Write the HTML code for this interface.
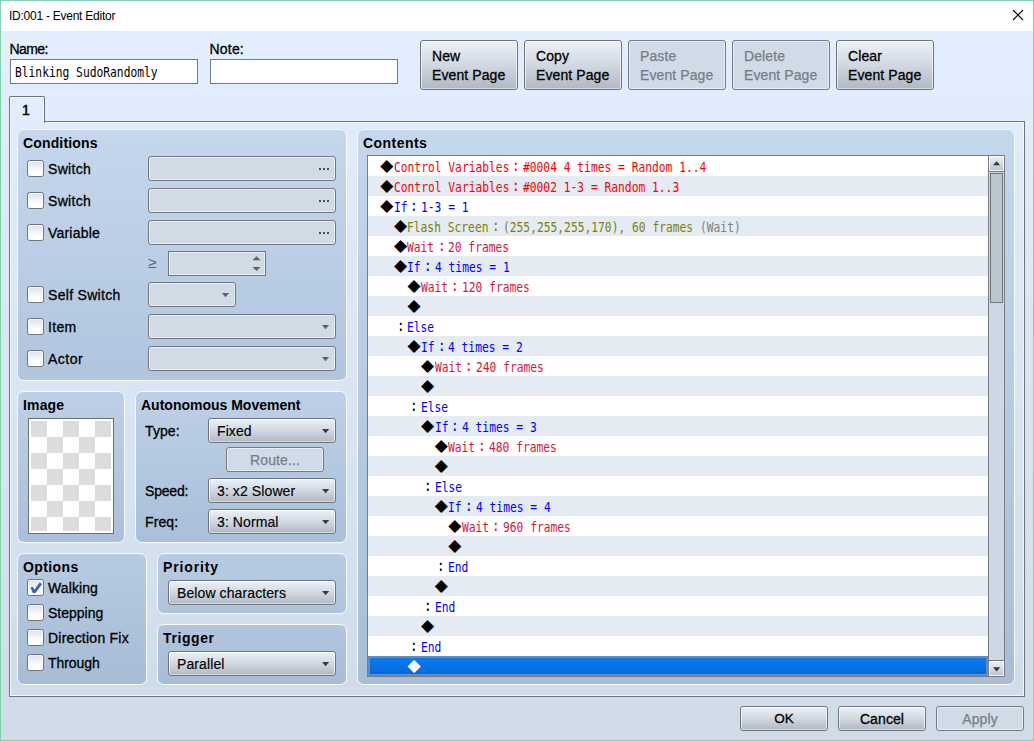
<!DOCTYPE html>
<html lang="en"><head><meta charset="utf-8"><title>ID:001 - Event Editor</title>
<style>
*{box-sizing:border-box;margin:0;padding:0}
html,body{width:1034px;height:741px;overflow:hidden}
body{background:#7dd3ae;font-family:"Liberation Sans","DejaVu Sans",sans-serif;font-size:14px;color:#000;position:relative}
.abs,#win *{position:absolute}
#win{position:absolute;left:1px;top:1px;width:1032px;height:739px;background:#fff;overflow:hidden}
/* coordinates inside #cv are absolute page coordinates */
#cv{left:-1px;top:-1px;width:1034px;height:741px}
#bg{left:1px;top:31px;width:1032px;height:709px;background:linear-gradient(#e3eefe,#cfdce8)}
#title{left:9px;top:8px;font-size:12px;line-height:16px;white-space:pre;letter-spacing:-.25px}
.lbl{white-space:pre;line-height:16px;-webkit-text-stroke:.3px #000;letter-spacing:.1px}
.hd{white-space:pre;line-height:16px;font-weight:bold;letter-spacing:.15px}
.inp{background:#fff;border:1px solid #777b80}
.mono{font-family:"DejaVu Sans Mono","Liberation Mono",monospace;font-size:13.5px;white-space:pre;transform-origin:0 50%;transform:scaleX(.8355);line-height:16px}
.btn{border:1px solid #6f757d;border-radius:3px;background:linear-gradient(#edf1f8,#d1d8e1 50%,#b1b8c3);box-shadow:inset 0 1px 0 0 rgba(255,255,255,.85),inset 0 -1px 0 0 rgba(255,255,255,.45),inset 1px 0 0 0 rgba(255,255,255,.6),inset -1px 0 0 0 rgba(255,255,255,.6)}
.btn.dis{background:#d0dbe7;border-color:#747a82;box-shadow:inset 0 0 0 1px rgba(255,255,255,.5)}
.btn .lbl{left:11px}
.dis .lbl{color:#777d87;-webkit-text-stroke:.25px #777d87}
.pane{border:1px solid #70747a;box-shadow:inset 0 0 0 1px #f4f8fd}
.tab{border:1px solid #70747a;border-bottom:none;border-radius:2px 2px 0 0;background:#e1ecfc;box-shadow:inset 1px 1px 0 0 #f4f8fd,inset -1px 0 0 0 #f4f8fd}
.panel{border:1px solid #f6f9fd;border-radius:7px}
.fld{border:1px solid #72787f;border-radius:3px;background:#d0dbe6;box-shadow:inset 0 0 0 1px rgba(255,255,255,.5)}
.cb{width:17px;height:17px;border:1px solid #6f757d;border-radius:2.5px;background:linear-gradient(#dce3ed,#fff 75%);box-shadow:inset 0 0 0 1px rgba(255,255,255,.6)}
.arr{width:0;height:0;border-left:4px solid transparent;border-right:4px solid transparent;border-top:4px solid #3a3d42}
.arr.g{border-top-color:#5d6269;border-left-width:3.5px;border-right-width:3.5px}
.dots{font-size:0}
.dots i{width:2px;height:2px;background:#4a4e55;top:0}
#list{left:367px;top:155px;width:638px;height:522px;border:1px solid #787c82;background:#fff;overflow:hidden}
.row{left:0;width:620px;height:20px}
.row.alt{background:#e4ebf3}
.row.sel{background:linear-gradient(#0a7ef2,#0068da);box-shadow:inset 0 0 0 2px #668cbc}
.row span{top:3px;line-height:16px;white-space:pre}
.tx,.cl{font-family:"DejaVu Sans Mono","Liberation Mono",monospace;font-size:13.5px;transform-origin:0 50%;transform:scaleX(.8355)}
.cl{width:16.52px;text-align:center;font-size:16px;top:2px !important}
.dm{font-family:"DejaVu Sans","Liberation Sans",sans-serif;font-size:17px;width:13.8px;text-align:center;top:1px !important}
.sel .dm{color:#fff}
.r{color:#ff0000}.b{color:#0000ff}.o{color:#808000}.w{color:#dc143c}.g{color:#808080}
#sb{left:620px;top:0;width:16px;height:520px;background:#cdd8e4;border-left:1px solid #787c82}
.sbtn{background:linear-gradient(#eef1f5,#bcc3cc);box-shadow:inset 0 0 0 1px rgba(255,255,255,.75)}
.arr.up{border-top:none;border-bottom:4px solid #3a3d42;border-left-width:3.5px;border-right-width:3.5px}
.thumb{background:#bcc6d1;border:1px solid #70757c}
.k{color:#000}
.cl2{letter-spacing:.3px}
.ar{right:5px;top:9.8px}
.cmb .lbl{-webkit-text-stroke:.15px #000}

</style></head>
<body>
<div id="win"><div id="cv">
<div id="bg"></div>
<div id="title">ID:001 - Event Editor</div>
<svg id="close" style="left:1012px;top:9px" width="12" height="12" viewBox="0 0 12 12"><path d="M1 1 L11 11 M11 1 L1 11" stroke="#000" stroke-width="1.1" fill="none"/></svg>

<div class="lbl" style="left:9.5px;top:41px;letter-spacing:-.6px">Name:</div>
<div class="inp" style="left:10px;top:59px;width:188px;height:25px"><span class="mono" style="left:4px;top:4px">Blinking SudoRandomly</span></div>
<div class="lbl" style="left:209.5px;top:41px;letter-spacing:.2px">Note:</div>
<div class="inp" style="left:210px;top:59px;width:188px;height:25px"></div>

<div class="btn" style="left:420px;top:40px;width:98px;height:50px"><span class="lbl" style="top:7px">New</span><span class="lbl" style="top:26px">Event Page</span></div>
<div class="btn" style="left:524px;top:40px;width:98px;height:50px"><span class="lbl" style="top:7px">Copy</span><span class="lbl" style="top:26px">Event Page</span></div>
<div class="btn dis" style="left:628px;top:40px;width:98px;height:50px"><span class="lbl" style="top:7px">Paste</span><span class="lbl" style="top:26px">Event Page</span></div>
<div class="btn dis" style="left:732px;top:40px;width:98px;height:50px"><span class="lbl" style="top:7px">Delete</span><span class="lbl" style="top:26px">Event Page</span></div>
<div class="btn" style="left:836px;top:40px;width:98px;height:50px"><span class="lbl" style="top:7px">Clear</span><span class="lbl" style="top:26px">Event Page</span></div>

<div class="pane" style="left:9px;top:121px;width:1016px;height:576px"></div>
<div class="tab" style="left:9px;top:96px;width:36px;height:27px"><span class="lbl" style="left:12px;top:5px;-webkit-text-stroke:.5px #000">1</span></div>

<!-- Conditions -->
<div class="panel" style="left:17px;top:129px;width:330px;height:252px;background:linear-gradient(#c5d7ec,#b0c5de)"></div>
<div class="hd" style="left:23px;top:135px">Conditions</div>
<div class="cb" style="left:27px;top:160px"></div><div class="lbl cl2" style="left:48px;top:161px">Switch</div>
<div class="cb" style="left:27px;top:192px"></div><div class="lbl cl2" style="left:48px;top:193px">Switch</div>
<div class="cb" style="left:27px;top:224px"></div><div class="lbl cl2" style="left:48px;top:225px;letter-spacing:.2px">Variable</div>
<div class="cb" style="left:27px;top:286px"></div><div class="lbl cl2" style="left:48px;top:287px">Self Switch</div>
<div class="cb" style="left:27px;top:318px"></div><div class="lbl cl2" style="left:48px;top:319px">Item</div>
<div class="cb" style="left:27px;top:350px"></div><div class="lbl cl2" style="left:48px;top:351px;letter-spacing:.5px">Actor</div>
<div class="fld" style="left:148px;top:156px;width:188px;height:25px"><span class="dots" style="left:170px;top:11px"><i style="left:0"></i><i style="left:4px"></i><i style="left:8px"></i></span></div>
<div class="fld" style="left:148px;top:188px;width:188px;height:25px"><span class="dots" style="left:170px;top:11px"><i style="left:0"></i><i style="left:4px"></i><i style="left:8px"></i></span></div>
<div class="fld" style="left:148px;top:220px;width:188px;height:25px"><span class="dots" style="left:170px;top:11px"><i style="left:0"></i><i style="left:4px"></i><i style="left:8px"></i></span></div>
<div class="lbl" style="left:148px;top:255px;font-size:15.5px;color:#5f656d;-webkit-text-stroke:0">≥</div>
<div class="fld" style="left:168px;top:251px;width:98px;height:25px;border-radius:0">
 <svg style="left:83px;top:4px" width="9" height="16" viewBox="0 0 9 16"><path d="M0.5 4.2 L4.5 0.2 L8.5 4.2 Z M0.5 11 L8.5 11 L4.5 15 Z" fill="#5d6269"/></svg></div>
<div class="fld" style="left:148px;top:282px;width:88px;height:25px"><svg class="ar" width="8" height="5" viewBox="0 0 8 5"><path d="M0 0 L7 0 L3.5 4.3 Z" fill="#5d6269"/></svg></div>
<div class="fld" style="left:148px;top:314px;width:188px;height:25px"><svg class="ar" width="8" height="5" viewBox="0 0 8 5"><path d="M0 0 L7 0 L3.5 4.3 Z" fill="#5d6269"/></svg></div>
<div class="fld" style="left:148px;top:346px;width:188px;height:25px"><svg class="ar" width="8" height="5" viewBox="0 0 8 5"><path d="M0 0 L7 0 L3.5 4.3 Z" fill="#5d6269"/></svg></div>

<!-- Image -->
<div class="panel" style="left:17px;top:391px;width:108px;height:152px;background:linear-gradient(#bdd0e7,#aabfd9)"></div>
<div class="hd" style="left:23px;top:397px">Image</div>
<div id="img" style="left:28px;top:418px;width:86px;height:116px;border:1px solid #6e7278;background:#fff">
 <div style="left:2px;top:2px;width:80px;height:110px;background-color:#fff;background-image:conic-gradient(#fff 25%,#dcdcdc 0 50%,#fff 0 75%,#dcdcdc 0);background-size:32px 32px"></div>
</div>

<!-- Autonomous Movement -->
<div class="panel" style="left:135px;top:391px;width:212px;height:152px;background:linear-gradient(#bdd0e7,#aabfd9)"></div>
<div class="hd" style="left:141px;top:397px;letter-spacing:0">Autonomous Movement</div>
<div class="lbl" style="left:145px;top:423px">Type:</div>
<div class="lbl" style="left:145px;top:483px;letter-spacing:-.2px">Speed:</div>
<div class="lbl" style="left:145px;top:514px">Freq:</div>
<div class="btn cmb" style="left:208px;top:418px;width:128px;height:25px"><span class="lbl" style="left:8px;top:4px">Fixed</span><svg class="ar" width="8" height="5" viewBox="0 0 8 5"><path d="M0 0 L7.2 0 L3.6 4.2 Z" fill="#393c41"/></svg></div>
<div class="btn dis" style="left:226px;top:447px;width:98px;height:25px"><span class="lbl" style="left:0;width:96px;text-align:center;top:4px">Route...</span></div>
<div class="btn cmb" style="left:208px;top:478px;width:128px;height:25px"><span class="lbl" style="left:8px;top:4px">3: x2 Slower</span><svg class="ar" width="8" height="5" viewBox="0 0 8 5"><path d="M0 0 L7.2 0 L3.6 4.2 Z" fill="#393c41"/></svg></div>
<div class="btn cmb" style="left:208px;top:509px;width:128px;height:25px"><span class="lbl" style="left:8px;top:4px">3: Normal</span><svg class="ar" width="8" height="5" viewBox="0 0 8 5"><path d="M0 0 L7.2 0 L3.6 4.2 Z" fill="#393c41"/></svg></div>

<!-- Options -->
<div class="panel" style="left:17px;top:553px;width:130px;height:132px;background:linear-gradient(#b7cbe2,#a7bcd5)"></div>
<div class="hd" style="left:23px;top:559px;letter-spacing:.4px">Options</div>
<div class="cb" style="left:27px;top:579px"><svg style="left:-1px;top:-1px" width="17" height="17" viewBox="0 0 17 17"><path d="M3.4 8.4 L5.8 7.8 L7.3 10.7 L12.75 3.5 L15 5 L8.5 13.9 L5.8 14 Z" fill="#3a5cbe"/></svg></div><div class="lbl cl2" style="left:48px;top:580px;letter-spacing:.1px">Walking</div>
<div class="cb" style="left:27px;top:604px"></div><div class="lbl cl2" style="left:48px;top:605px;letter-spacing:0">Stepping</div>
<div class="cb" style="left:27px;top:629px"></div><div class="lbl cl2" style="left:48px;top:630px;letter-spacing:.24px">Direction Fix</div>
<div class="cb" style="left:27px;top:654px"></div><div class="lbl cl2" style="left:48px;top:655px;letter-spacing:-.05px">Through</div>

<!-- Priority / Trigger -->
<div class="panel" style="left:157px;top:553px;width:190px;height:61px;background:linear-gradient(#b7cbe2,#afc4dc)"></div>
<div class="hd" style="left:163px;top:559px;letter-spacing:.85px">Priority</div>
<div class="btn cmb" style="left:168px;top:580px;width:168px;height:25px"><span class="lbl" style="left:8px;top:4px">Below characters</span><svg class="ar" width="8" height="5" viewBox="0 0 8 5"><path d="M0 0 L7.2 0 L3.6 4.2 Z" fill="#393c41"/></svg></div>
<div class="panel" style="left:157px;top:624px;width:190px;height:61px;background:linear-gradient(#b1c6de,#a7bcd5)"></div>
<div class="hd" style="left:163px;top:630px;letter-spacing:.6px">Trigger</div>
<div class="btn cmb" style="left:168px;top:651px;width:168px;height:25px"><span class="lbl" style="left:8px;top:4px">Parallel</span><svg class="ar" width="8" height="5" viewBox="0 0 8 5"><path d="M0 0 L7.2 0 L3.6 4.2 Z" fill="#393c41"/></svg></div>

<!-- Contents -->
<div class="panel" style="left:357px;top:129px;width:658px;height:556px;background:linear-gradient(#c5d7ec,#a9bdd6)"></div>
<div class="hd" style="left:363px;top:135px;letter-spacing:.45px">Contents</div>
<div id="list">
<div class="row" style="top:0px"><span class="dm" style="left:12.00px">◆</span><span class="tx r" style="left:25.80px">Control Variables</span><span class="cl r" style="left:141.23px">:</span><span class="tx r" style="left:155.03px">#0004 4 times = Random 1..4</span></div>
<div class="row alt" style="top:20px"><span class="dm" style="left:12.00px">◆</span><span class="tx r" style="left:25.80px">Control Variables</span><span class="cl r" style="left:141.23px">:</span><span class="tx r" style="left:155.03px">#0002 1-3 = Random 1..3</span></div>
<div class="row" style="top:40px"><span class="dm" style="left:12.00px">◆</span><span class="tx b" style="left:25.80px">If</span><span class="cl b" style="left:39.38px">:</span><span class="tx b" style="left:53.18px">1-3 = 1</span></div>
<div class="row alt" style="top:60px"><span class="dm" style="left:25.58px">◆</span><span class="tx o" style="left:39.38px">Flash Screen</span><span class="cl o" style="left:120.86px">:</span><span class="tx o" style="left:134.66px">(255,255,255,170), 60 frames </span><span class="tx g" style="left:331.57px">(Wait)</span></div>
<div class="row" style="top:80px"><span class="dm" style="left:25.58px">◆</span><span class="tx w" style="left:39.38px">Wait</span><span class="cl w" style="left:66.54px">:</span><span class="tx w" style="left:80.34px">20 frames</span></div>
<div class="row alt" style="top:100px"><span class="dm" style="left:25.58px">◆</span><span class="tx b" style="left:39.38px">If</span><span class="cl b" style="left:52.96px">:</span><span class="tx b" style="left:66.76px">4 times = 1</span></div>
<div class="row" style="top:120px"><span class="dm" style="left:39.16px">◆</span><span class="tx w" style="left:52.96px">Wait</span><span class="cl w" style="left:80.12px">:</span><span class="tx w" style="left:93.92px">120 frames</span></div>
<div class="row alt" style="top:140px"><span class="dm" style="left:39.16px">◆</span></div>
<div class="row" style="top:160px"><span class="cl k" style="left:25.58px">:</span><span class="tx b" style="left:39.38px">Else</span></div>
<div class="row alt" style="top:180px"><span class="dm" style="left:39.16px">◆</span><span class="tx b" style="left:52.96px">If</span><span class="cl b" style="left:66.54px">:</span><span class="tx b" style="left:80.34px">4 times = 2</span></div>
<div class="row" style="top:200px"><span class="dm" style="left:52.74px">◆</span><span class="tx w" style="left:66.54px">Wait</span><span class="cl w" style="left:93.70px">:</span><span class="tx w" style="left:107.50px">240 frames</span></div>
<div class="row alt" style="top:220px"><span class="dm" style="left:52.74px">◆</span></div>
<div class="row" style="top:240px"><span class="cl k" style="left:39.16px">:</span><span class="tx b" style="left:52.96px">Else</span></div>
<div class="row alt" style="top:260px"><span class="dm" style="left:52.74px">◆</span><span class="tx b" style="left:66.54px">If</span><span class="cl b" style="left:80.12px">:</span><span class="tx b" style="left:93.92px">4 times = 3</span></div>
<div class="row" style="top:280px"><span class="dm" style="left:66.32px">◆</span><span class="tx w" style="left:80.12px">Wait</span><span class="cl w" style="left:107.28px">:</span><span class="tx w" style="left:121.08px">480 frames</span></div>
<div class="row alt" style="top:300px"><span class="dm" style="left:66.32px">◆</span></div>
<div class="row" style="top:320px"><span class="cl k" style="left:52.74px">:</span><span class="tx b" style="left:66.54px">Else</span></div>
<div class="row alt" style="top:340px"><span class="dm" style="left:66.32px">◆</span><span class="tx b" style="left:80.12px">If</span><span class="cl b" style="left:93.70px">:</span><span class="tx b" style="left:107.50px">4 times = 4</span></div>
<div class="row" style="top:360px"><span class="dm" style="left:79.90px">◆</span><span class="tx w" style="left:93.70px">Wait</span><span class="cl w" style="left:120.86px">:</span><span class="tx w" style="left:134.66px">960 frames</span></div>
<div class="row alt" style="top:380px"><span class="dm" style="left:79.90px">◆</span></div>
<div class="row" style="top:400px"><span class="cl k" style="left:66.32px">:</span><span class="tx b" style="left:80.12px">End</span></div>
<div class="row alt" style="top:420px"><span class="dm" style="left:66.32px">◆</span></div>
<div class="row" style="top:440px"><span class="cl k" style="left:52.74px">:</span><span class="tx b" style="left:66.54px">End</span></div>
<div class="row alt" style="top:460px"><span class="dm" style="left:52.74px">◆</span></div>
<div class="row" style="top:480px"><span class="cl k" style="left:39.16px">:</span><span class="tx b" style="left:52.96px">End</span></div>
<div class="row alt sel" style="top:500px"><span class="dm" style="left:39.16px">◆</span></div>
<div id="sb">
 <div class="sbtn" style="left:0;top:0;width:15px;height:16px;border-bottom:1px solid #757b83"><svg style="left:4px;top:5.1px" width="8" height="5" viewBox="0 0 8 5"><path d="M0 4.3 L3.6 0.3 L7.2 4.3 Z" fill="#33363b"/></svg></div>
 <div class="thumb" style="left:1px;top:17px;width:13px;height:130px"></div>
 <div class="sbtn" style="left:0;top:504px;width:15px;height:16px;border-top:1px solid #757b83"><svg style="left:4px;top:6px" width="8" height="5" viewBox="0 0 8 5"><path d="M0 0.3 L7.2 0.3 L3.6 4.5 Z" fill="#33363b"/></svg></div>
</div>
</div>

<!-- bottom buttons -->
<div class="btn" style="left:740px;top:706px;width:88px;height:25px"><span class="lbl" style="left:0;width:86px;text-align:center;top:3.5px;font-size:13.5px">OK</span></div>
<div class="btn" style="left:838px;top:706px;width:88px;height:25px"><span class="lbl" style="left:0;width:86px;text-align:center;top:3.5px">Cancel</span></div>
<div class="btn dis" style="left:936px;top:706px;width:88px;height:25px"><span class="lbl" style="left:0;width:86px;text-align:center;top:3.5px">Apply</span></div>
</div></div>

</body></html>
